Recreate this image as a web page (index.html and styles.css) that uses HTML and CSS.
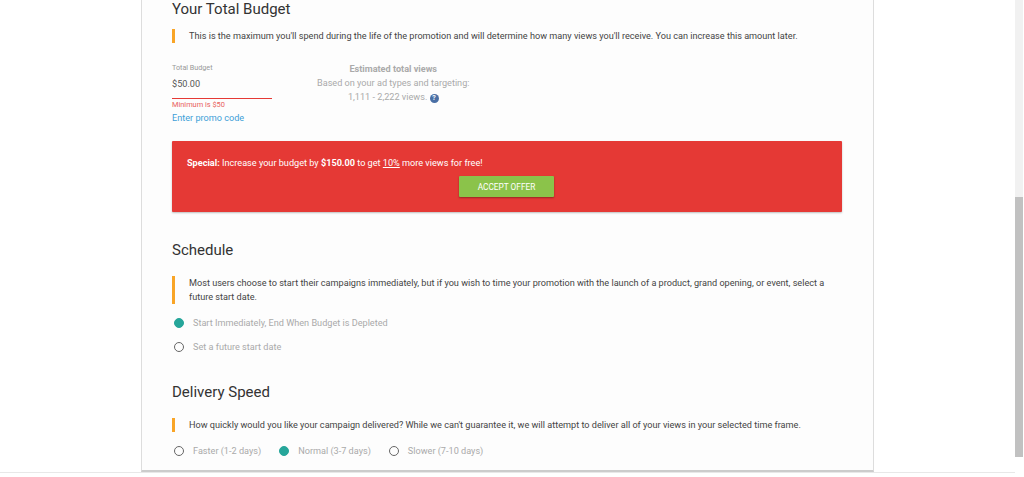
FILE: index.html
```html
<!DOCTYPE html>
<html lang="en">
<head>
    <meta charset="UTF-8">
    <meta name="viewport" content="width=device-width, initial-scale=1.0">
    <title>Promotion Budget</title>
    <link rel="stylesheet" href="styles.css">
</head>
<body>
    <div class="page">
        <div class="content">
            <main class="card">
                <h2 class="heading heading-first">Your Total Budget</h2>
                <p class="note">This is the maximum you'll spend during the life of the promotion and will determine how many views you'll receive. You can increase this amount later.</p>

                <div class="budget-row">
                    <div class="budget-field">
                        <div class="field-label">Total Budget</div>
                        <div class="field-value">$50.00</div>
                        <div class="field-error">Minimum is $50</div>
                        <a class="promo-link" href="#">Enter promo code</a>
                    </div>
                    <div class="estimate">
                        <div class="estimate-title">Estimated total views</div>
                        <div>Based on your ad types and targeting:</div>
                        <div class="estimate-range">1,111 - 2,222 views. <span class="help-icon">?</span></div>
                    </div>
                </div>

                <section class="offer">
                    <p class="offer-text"><b>Special:</b> Increase your budget by <b>$150.00</b> to get <u>10%</u> more views for free!</p>
                    <button class="offer-button">ACCEPT OFFER</button>
                </section>

                <h2 class="heading heading-schedule">Schedule</h2>
                <p class="note">Most users choose to start their campaigns immediately, but if you wish to time your promotion with the launch of a product, grand opening, or event, select a future start date.</p>
                <div class="radio-stack">
                    <label class="radio"><span class="dot dot-on"></span>Start Immediately, End When Budget is Depleted</label>
                    <label class="radio"><span class="dot"></span>Set a future start date</label>
                </div>

                <h2 class="heading heading-speed">Delivery Speed</h2>
                <p class="note">How quickly would you like your campaign delivered? While we can't guarantee it, we will attempt to deliver all of your views in your selected time frame.</p>
                <div class="radio-line">
                    <label class="radio"><span class="dot"></span>Faster (1-2 days)</label>
                    <label class="radio"><span class="dot dot-on"></span>Normal (3-7 days)</label>
                    <label class="radio"><span class="dot"></span>Slower (7-10 days)</label>
                </div>
            </main>
        </div>
        <div class="scrollbar"><div class="scrollbar-thumb"></div></div>
    </div>
</body>
</html>
```

FILE: styles.css
```css
html, body {
    height: 100%;
    margin: 0;
    overflow: hidden;
}

body {
    font-family: Roboto, "Liberation Sans", sans-serif;
    background-color: #fff;
    color: #444;
}

.page {
    display: flex;
    align-items: flex-start;
    height: 477px;
}

.content {
    flex: 1;
    height: 473px;
    box-sizing: border-box;
    padding-left: 141px;
    border-bottom: 1px solid #e8e8e8;
}

.card {
    width: 733px;
    height: 473px;
    box-sizing: border-box;
    padding: 0 31px 0 30px;
    background-color: #fdfdfd;
    border-left: 1px solid #ddd;
    border-right: 1px solid #ddd;
    border-bottom: 2px solid #ccc;
}

.heading {
    margin: 0;
    font-size: 15px;
    font-weight: 400;
    line-height: 20px;
    color: #333;
}

.heading-first {
    margin-top: -1px;
}

.heading-schedule {
    margin-top: 28px;
}

.heading-speed {
    margin-top: 28px;
}

.note {
    margin: 16px 0 0;
    padding-left: 14px;
    border-left: 3px solid #f9a527;
    font-size: 9.15px;
    line-height: 14px;
    color: #444;
}

.heading-first + .note {
    margin-top: 10px;
}

.budget-row {
    display: flex;
    margin-top: 20px;
}

.budget-field {
    width: 100px;
}

.field-label {
    font-size: 7.2px;
    line-height: 10px;
    color: #999;
}

.field-value {
    margin-top: 4px;
    padding-bottom: 7px;
    border-bottom: 1px solid #e53935;
    font-size: 9.15px;
    line-height: 14px;
    color: #555;
}

.field-error {
    margin-top: 1px;
    font-size: 7.4px;
    line-height: 10px;
    color: #e8605c;
}

.promo-link {
    display: block;
    margin-top: 2px;
    font-size: 9.15px;
    line-height: 13px;
    color: #3fa0d8;
    text-decoration: none;
}

.estimate {
    margin-left: 45px;
    margin-top: -1px;
    text-align: center;
    font-size: 9.15px;
    line-height: 14px;
    color: #aaa;
}

.estimate-title {
    font-weight: 700;
}

.help-icon {
    display: inline-block;
    width: 9px;
    height: 9px;
    border-radius: 50%;
    background-color: #4a6fa5;
    color: #fff;
    font-size: 7px;
    font-weight: 700;
    line-height: 9px;
    text-align: center;
}

.offer {
    margin-top: 16px;
    height: 71px;
    box-sizing: border-box;
    padding: 15px 15px 0;
    background-color: #e53935;
    border-radius: 1px;
    box-shadow: 0 1px 2px rgba(0, 0, 0, 0.25);
    color: #fff;
}

.offer-text {
    margin: 0;
    font-size: 9.15px;
    line-height: 14px;
}

.offer-button {
    display: block;
    width: 95px;
    height: 21px;
    margin: 6px 0 0 272px;
    padding: 0;
    border: 0;
    border-radius: 1px;
    background-color: #8bc34a;
    box-shadow: 0 1px 2px rgba(0, 0, 0, 0.35);
    color: #fff;
    font-family: inherit;
    font-size: 8.3px;
    font-weight: 400;
}

.radio-stack {
    display: flex;
    flex-direction: column;
    gap: 10px;
    margin-top: 12px;
}

.radio-line {
    display: flex;
    gap: 16px;
    margin-top: 12px;
}

.radio {
    display: flex;
    align-items: center;
    height: 14px;
    font-size: 9.15px;
    color: #aaa;
}

.dot {
    width: 10px;
    height: 10px;
    box-sizing: border-box;
    margin: 0 9px 0 2px;
    border: 1.5px solid #666;
    border-radius: 50%;
}

.dot-on {
    border-color: #26a69a;
    background-color: #26a69a;
}

.scrollbar {
    width: 8px;
    height: 457px;
    margin-right: 1px;
    padding-top: 197px;
    box-sizing: border-box;
    background-color: #f1f1f1;
}

.scrollbar-thumb {
    height: 260px;
    background-color: #c1c1c1;
}
```
